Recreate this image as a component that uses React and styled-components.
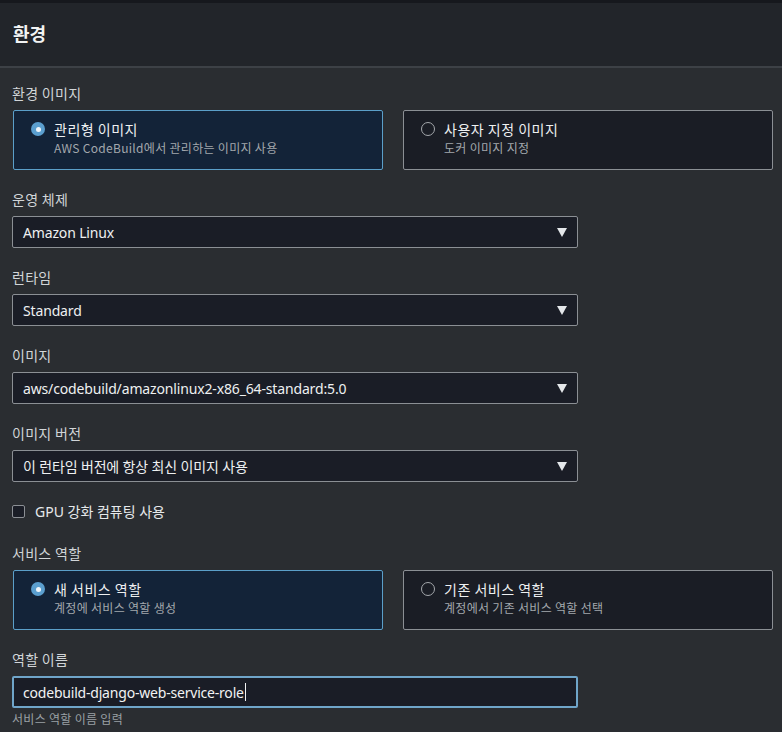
import React from "react";
import styled, { createGlobalStyle } from "styled-components";

const Global = createGlobalStyle`
  html, body { margin: 0; padding: 0; background: #2a2d31; }
  body {
    font-family: "Noto Sans", "Noto Sans CJK KR", sans-serif;
    color: #d5dbdb;
    -webkit-font-smoothing: antialiased;
  }
`;

const Page = styled.div`
  width: 782px;
  height: 732px;
  overflow: hidden;
  background: #2a2d31;
  border-top: 3px solid #16181d;
  box-sizing: border-box;
`;

const Header = styled.header`
  height: 65px;
  box-sizing: border-box;
  display: flex;
  align-items: center;
  padding: 0 0 4px 13px;
  background: #22252a;
  border-bottom: 2px solid #3d4146;
`;

const Title = styled.h2`
  margin: 0;
  font-size: 18px;
  font-weight: 700;
  color: #f2f3f3;
  font-family: "Noto Sans CJK KR", sans-serif;
`;

const Body = styled.div`
  padding: 16px 10px 0 12px;
  display: flex;
  flex-direction: column;
`;

const Field = styled.div`
  display: flex;
  flex-direction: column;
  margin-bottom: ${(p) => p.$mb ?? 20}px;
`;

const Label = styled.div`
  font-size: 14px;
  line-height: 20px;
  color: #d1d5d8;
  margin-top: -1px;
  margin-bottom: ${(p) => p.$mb ?? 7}px;
  letter-spacing: 0.3px;
  font-family: "Noto Sans CJK KR", sans-serif;
`;

const Tiles = styled.div`
  display: grid;
  grid-template-columns: 370px 370px;
  column-gap: 20px;
  padding-left: 1px;
`;

const Tile = styled.div`
  height: 60px;
  box-sizing: border-box;
  border: 1px solid ${(p) => (p.$selected ? "#5b9fc9" : "#8b8f94")};
  background: ${(p) => (p.$selected ? "#132338" : "#1a1d25")};
  border-radius: 2px;
  display: flex;
  align-items: flex-start;
  padding: 8px 0 0 17px;
  gap: 9px;
`;

const Radio = styled.span`
  width: 14px;
  height: 14px;
  box-sizing: border-box;
  border-radius: 50%;
  margin-top: 3px;
  flex: none;
  ${(p) =>
    p.$on
      ? `background: #5b9fcf; display:flex; align-items:center; justify-content:center;
         &::after { content:""; width:5px; height:5px; border-radius:50%; background:#f2f6fa; }`
      : `border: 1.5px solid #a4a8ac;`}
`;

const TileText = styled.div`
  display: flex;
  flex-direction: column;
  font-family: "Noto Sans CJK KR", sans-serif;
`;

const TileTitle = styled.div`
  font-size: 14px;
  line-height: 20px;
  letter-spacing: 0.5px;
  color: #eef0f1;
`;

const TileDesc = styled.div`
  font-size: 12px;
  line-height: 18px;
  letter-spacing: 0.3px;
  color: #a3a8ad;
`;

const SelectBox = styled.div`
  width: 566px;
  height: 32px;
  box-sizing: border-box;
  border: 1px solid #8b8f94;
  border-radius: 2px;
  background: #1a1d26;
  display: flex;
  align-items: center;
  justify-content: space-between;
  padding: 0 10px 0 10px;
  font-size: 14px;
  letter-spacing: -0.15px;
  color: #eef0f1;
`;

const Arrow = styled.span`
  width: 0;
  height: 0;
  border-left: 5.5px solid transparent;
  border-right: 5.5px solid transparent;
  border-top: 9px solid #e4e7ea;
`;

const CheckRow = styled.label`
  display: flex;
  align-items: center;
  gap: 10px;
  height: 20px;
  margin: -1px 0 23px 0;
  font-size: 14px;
  color: #e6e9eb;
  font-family: "Noto Sans", "Noto Sans CJK KR", sans-serif;
`;

const Check = styled.span`
  width: 13px;
  height: 13px;
  box-sizing: border-box;
  border: 1.5px solid #8b8f94;
  border-radius: 2px;
  background: #1a1d26;
`;

const Input = styled.div`
  width: 566px;
  height: 32px;
  box-sizing: border-box;
  border: 2px solid #6fa5c9;
  border-radius: 2px;
  background: #1a1d26;
  display: flex;
  align-items: center;
  padding-left: 9px;
  font-size: 14px;
  letter-spacing: -0.2px;
  color: #f2f3f3;
`;

const Caret = styled.span`
  width: 1px;
  height: 18px;
  background: #f2f3f3;
  margin-left: 1px;
`;

const Hint = styled.div`
  font-size: 12px;
  line-height: 18px;
  letter-spacing: 0.3px;
  color: #9aa0a5;
  margin-top: 2px;
  font-family: "Noto Sans CJK KR", sans-serif;
`;

const Select = ({ value }) => (
  <SelectBox>
    <span>{value}</span>
    <Arrow />
  </SelectBox>
);

const TileGroup = ({ items }) => (
  <Tiles>
    {items.map((it) => (
      <Tile key={it.title} $selected={it.on}>
        <Radio $on={it.on} />
        <TileText>
          <TileTitle>{it.title}</TileTitle>
          <TileDesc>{it.desc}</TileDesc>
        </TileText>
      </Tile>
    ))}
  </Tiles>
);

export default function App() {
  return (
    <>
      <Global />
      <Page>
        <Header>
          <Title>환경</Title>
        </Header>
        <Body>
          <Field>
            <Label $mb={7}>환경 이미지</Label>
            <TileGroup
              items={[
                { title: "관리형 이미지", desc: "AWS CodeBuild에서 관리하는 이미지 사용", on: true },
                { title: "사용자 지정 이미지", desc: "도커 이미지 지정", on: false },
              ]}
            />
          </Field>
          <Field>
            <Label>운영 체제</Label>
            <Select value="Amazon Linux" />
          </Field>
          <Field>
            <Label>런타임</Label>
            <Select value="Standard" />
          </Field>
          <Field>
            <Label>이미지</Label>
            <Select value="aws/codebuild/amazonlinux2-x86_64-standard:5.0" />
          </Field>
          <Field>
            <Label>이미지 버전</Label>
            <Select value="이 런타임 버전에 항상 최신 이미지 사용" />
          </Field>
          <CheckRow>
            <Check />
            GPU 강화 컴퓨팅 사용
          </CheckRow>
          <Field>
            <Label $mb={7}>서비스 역할</Label>
            <TileGroup
              items={[
                { title: "새 서비스 역할", desc: "계정에 서비스 역할 생성", on: true },
                { title: "기존 서비스 역할", desc: "계정에서 기존 서비스 역할 선택", on: false },
              ]}
            />
          </Field>
          <Field $mb={0}>
            <Label>역할 이름</Label>
            <Input>
              codebuild-django-web-service-role
              <Caret />
            </Input>
            <Hint>서비스 역할 이름 입력</Hint>
          </Field>
        </Body>
      </Page>
    </>
  );
}
